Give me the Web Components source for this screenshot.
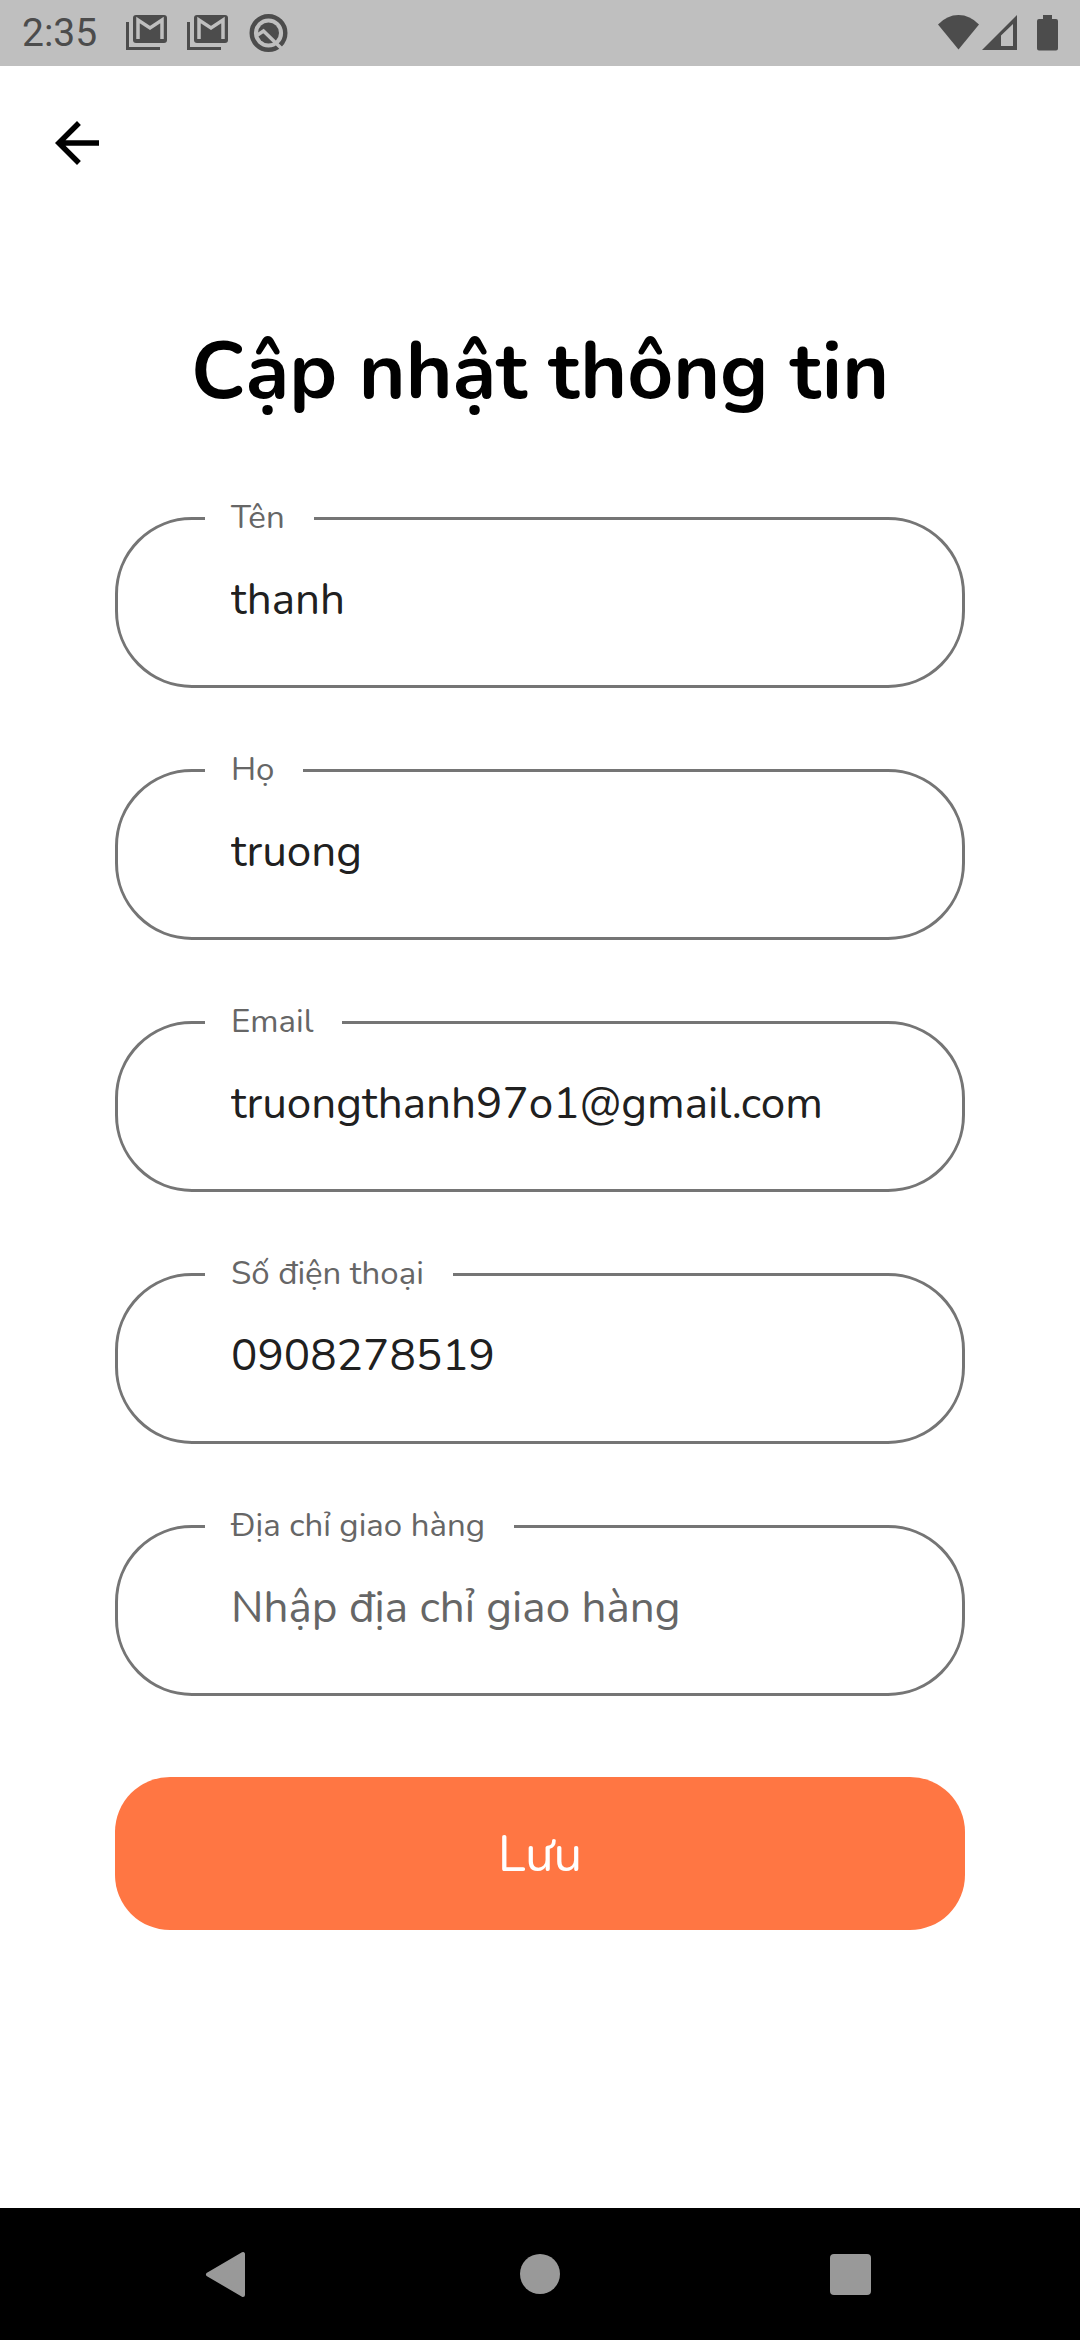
<!DOCTYPE html>
<html lang="vi">
<head>
<meta charset="utf-8">
<meta name="viewport" content="width=device-width, initial-scale=1">
<title>Cập nhật thông tin</title>
<style>
  body {
    margin: 0;
    min-height: 100vh;
    display: flex;
    flex-direction: column;
    background: #fff;
    color: #202020;
    font-family: Nunito, Lato, "Open Sans", sans-serif;
  }
  profile-form { flex: 1; }
</style>
</head>
<body>
<status-bar time="2:35"></status-bar>
<app-bar></app-bar>
<profile-form>
  <span slot="title">Cập nhật thông tin</span>
  <outlined-field label="Tên" name="firstname" value="thanh"></outlined-field>
  <outlined-field label="Họ" name="lastname" value="truong"></outlined-field>
  <outlined-field label="Email" name="email" type="email" value="truongthanh97o1@gmail.com"></outlined-field>
  <outlined-field label="Số điện thoại" name="phone" type="tel" value="0908278519"></outlined-field>
  <outlined-field label="Địa chỉ giao hàng" name="address" placeholder="Nhập địa chỉ giao hàng"></outlined-field>
  <primary-button slot="action">Lưu</primary-button>
</profile-form>
<nav-bar></nav-bar>

<script>
class StatusBar extends HTMLElement {
  connectedCallback() {
    const mail = `<svg width="42" height="36" viewBox="126 16 42 36">
      <path d="M127.500 23V49.500H160" fill="none" stroke="currentColor" stroke-width="3"/>
      <rect x="133" y="16" width="34" height="28" rx="3" fill="currentColor"/>
      <path d="M138 40V21L150 29L162 21V40" fill="none" stroke="#bfbfbf" stroke-width="3.500"/>
    </svg>`;
    this.attachShadow({ mode: 'open' }).innerHTML = `
      <style>
        :host { display: flex; align-items: center; justify-content: space-between; height: 66px; padding: 0 21px 0 22px;
                background: #bfbfbf; color: #4c4c4c; font-family: Roboto, sans-serif; font-size: 39px; line-height: 66px; }
        div { display: flex; align-items: center; }
        svg { display: block; }
        .notes { gap: 19px; }
        .time { margin-right: 10px; }
      </style>
      <div class="notes">
        <span class="time">${this.getAttribute('time')}</span>
        ${mail}${mail}
        <svg width="40" height="40" viewBox="248 13 40 40">
          <circle cx="268.500" cy="33" r="16.800" fill="none" stroke="currentColor" stroke-width="4.400"/>
          <circle cx="268.500" cy="33" r="10.500" fill="currentColor"/>
          <path d="M257.500 35L263.500 31L282 49" fill="none" stroke="#bfbfbf" stroke-width="3.500"/>
        </svg>
      </div>
      <div>
        <svg width="122" height="38" viewBox="937 14 122 38" fill="currentColor">
          <path d="M938 24.500Q947 15 958.500 15Q970 15 979 24.500L958.500 49.500Z"/>
          <path fill-rule="evenodd" d="M982 50H1017V15ZM1001 46V35.500L1013 24V46Z"/>
          <path d="M1043 15H1052V19H1056Q1058 19 1058 21V48.500Q1058 50.500 1056 50.500H1039Q1037 50.500 1037 48.500V21Q1037 19 1039 19H1043Z"/>
        </svg>
      </div>`;
  }
}

class AppBar extends HTMLElement {
  connectedCallback() {
    this.attachShadow({ mode: 'open' }).innerHTML = `
      <style>
        :host { display: flex; align-items: center; height: 154px; padding: 0 44px; }
        button { border: 0; padding: 0; background: none; color: #000; }
        svg { display: block; }
      </style>
      <button type="button" aria-label="Quay lại">
        <svg width="66" height="66" viewBox="0 0 24 24" fill="currentColor">
          <path d="M20 11H7.830L13.420 5.410L12 4L4 12L12 20L13.410 18.590L7.830 13H20Z"/>
        </svg>
      </button>`;
  }
}

class ProfileForm extends HTMLElement {
  connectedCallback() {
    this.attachShadow({ mode: 'open' }).innerHTML = `
      <style>
        :host { display: block; padding: 102px 115px; }
        h1 { margin: 0 0 74px; font-size: 80px; line-height: 100px; font-weight: 700; color: #000; text-align: center; }
        form { display: flex; flex-direction: column; gap: 60px; }
        .action { margin-top: 21px; }
      </style>
      <h1><slot name="title"></slot></h1>
      <form>
        <slot></slot>
        <div class="action"><slot name="action"></slot></div>
      </form>`;
  }
}

class OutlinedField extends HTMLElement {
  connectedCallback() {
    const attr = (name, fallback = '') => this.getAttribute(name) || fallback;
    this.attachShadow({ mode: 'open' }).innerHTML = `
      <style>
        :host { display: block; }
        fieldset { margin: 0; padding: 0 113px 0 87px; border: 3px solid #757575; border-radius: 77px; min-width: 0; }
        legend { padding: 0 29px 0 26px; }
        label { display: block; font-size: 33px; line-height: 44px; color: #666; }
        input { display: block; box-sizing: border-box; width: 100%; height: 145px; margin: 0; padding: 0 0 26px 26px; border: 0; outline: 0;
                background: none; color: inherit; font-family: inherit; font-size: 44px; }
        input::placeholder { color: #666; opacity: 1; }
      </style>
      <fieldset>
        <legend><label for="control">${attr('label')}</label></legend>
        <input id="control" name="${attr('name')}" type="${attr('type', 'text')}"
               value="${attr('value')}" placeholder="${attr('placeholder')}">
      </fieldset>`;
  }
}

class PrimaryButton extends HTMLElement {
  connectedCallback() {
    this.attachShadow({ mode: 'open' }).innerHTML = `
      <style>
        :host { display: block; }
        button { display: block; width: 100%; height: 153px; border: 0; border-radius: 55px; padding: 0;
                 background: #ff7643; color: #fff; font-family: inherit; font-size: 51px; line-height: 60px; }
      </style>
      <button type="submit"><slot></slot></button>`;
  }
}

class NavBar extends HTMLElement {
  connectedCallback() {
    this.attachShadow({ mode: 'open' }).innerHTML = `
      <style>
        :host { display: flex; align-items: center; justify-content: space-between; height: 132px; padding: 0 198px; background: #000; color: #999; }
        button { border: 0; padding: 0; background: none; color: inherit; }
        svg { display: block; }
      </style>
      <button type="button" aria-label="Back">
        <svg width="60" height="60" viewBox="0 0 60 60"><path d="M10 30.500L45 10V51Z" fill="currentColor" stroke="currentColor" stroke-width="4" stroke-linejoin="round"/></svg>
      </button>
      <button type="button" aria-label="Home">
        <svg width="60" height="60" viewBox="0 0 60 60"><circle cx="30" cy="30" r="20" fill="currentColor"/></svg>
      </button>
      <button type="button" aria-label="Recents">
        <svg width="60" height="60" viewBox="0 0 60 60"><rect x="8" y="10" width="41" height="41" rx="4" fill="currentColor"/></svg>
      </button>`;
  }
}

customElements.define('status-bar', StatusBar);
customElements.define('app-bar', AppBar);
customElements.define('profile-form', ProfileForm);
customElements.define('outlined-field', OutlinedField);
customElements.define('primary-button', PrimaryButton);
customElements.define('nav-bar', NavBar);
</script>
</body>
</html>
